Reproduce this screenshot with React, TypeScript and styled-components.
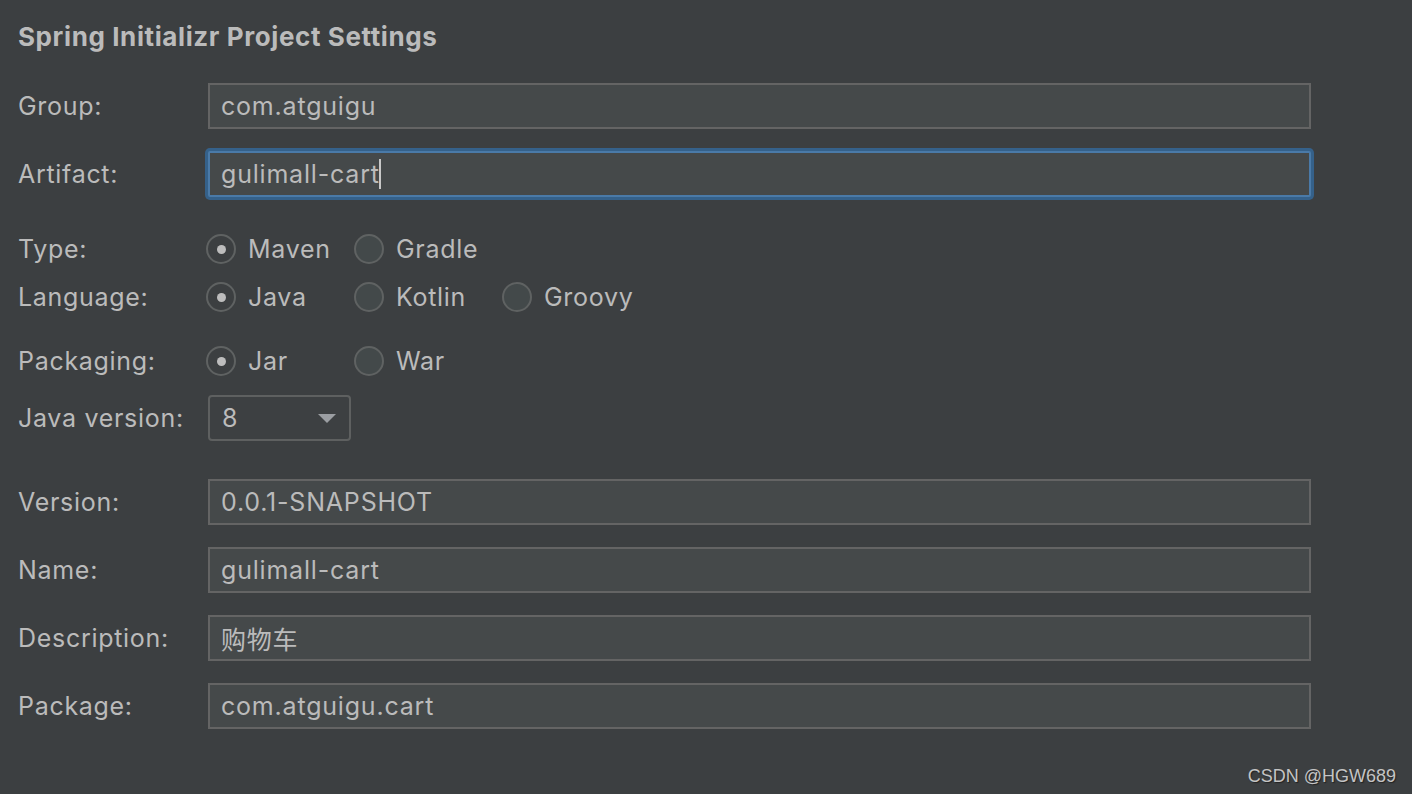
import React from "react";
import styled, { createGlobalStyle } from "styled-components";

const Global = createGlobalStyle`
  html, body { margin: 0; padding: 0; background: #3c3f41; }
  body { font-family: Inter, "Noto Sans", "Noto Sans CJK SC", sans-serif; color: #bbbbbb; }
`;

const Page = styled.div`
  position: relative;
  width: 1412px;
  height: 794px;
  background: #3c3f41;
  box-sizing: border-box;
  padding: 22px 0 0 18px;
  overflow: hidden;
`;

const Title = styled.h1`
  margin: 0;
  font-size: 26px;
  line-height: 30px;
  font-weight: 700;
  color: #bbbbbb;
  letter-spacing: 0.6px;
`;

const Row = styled.div<{ $top: number; $h: number }>`
  display: grid;
  grid-template-columns: 190px 1103px;
  align-items: center;
  height: ${(p) => p.$h}px;
  margin-top: ${(p) => p.$top}px;
`;

const Label = styled.label`
  font-size: 25px;
  color: #bbbbbb;
  line-height: 30px;
  letter-spacing: 0.7px;
`;

const Field = styled.div<{ $focused?: boolean }>`
  box-sizing: border-box;
  height: 46px;
  width: 1103px;
  background: #45494a;
  border: 2px solid ${(p) => (p.$focused ? "#4a7aa8" : "#646464")};
  border-radius: ${(p) => (p.$focused ? "2px" : "0")};
  box-shadow: ${(p) => (p.$focused ? "0 0 0 3px #35618a" : "none")};
  padding-left: 11px;
  display: flex;
  align-items: center;
  font-size: 25px;
  letter-spacing: 0.8px;
  color: #bbbbbb;
  font-family: Inter, "Noto Sans CJK SC", sans-serif;
`;

const Caret = styled.span`
  display: inline-block;
  width: 2px;
  height: 30px;
  background: #c8c8c8;
  margin-left: -1px;
`;

const RadioGroup = styled.div`
  display: grid;
  grid-template-columns: repeat(3, 148px);
  margin-left: -2px;
`;

const Option = styled.div`
  display: flex;
  align-items: center;
  gap: 12px;
  font-size: 25px;
  letter-spacing: 0.7px;
  color: #bbbbbb;
`;

const Circle = styled.span<{ $checked?: boolean }>`
  box-sizing: border-box;
  width: 30px;
  height: 30px;
  border-radius: 50%;
  border: 2px solid #5f6262;
  background: ${(p) => (p.$checked ? "#3c3f41" : "#43494a")};
  display: flex;
  align-items: center;
  justify-content: center;
  &::after {
    content: "";
    display: ${(p) => (p.$checked ? "block" : "none")};
    width: 9px;
    height: 9px;
    border-radius: 50%;
    background: #bdbdbd;
  }
`;

const Select = styled.div`
  box-sizing: border-box;
  width: 143px;
  height: 46px;
  border: 2px solid #5e6060;
  border-radius: 4px;
  background: #3d4042;
  display: flex;
  align-items: center;
  justify-content: space-between;
  padding: 0 13px 0 12px;
  font-size: 25px;
  color: #bbbbbb;
`;

const Arrow = styled.span`
  width: 0;
  height: 0;
  border-left: 9px solid transparent;
  border-right: 9px solid transparent;
  border-top: 9px solid #9b9ea2;
`;

const Watermark = styled.div`
  position: absolute;
  right: 16px;
  bottom: 7px;
  font-family: "Liberation Sans", Arial, sans-serif;
  font-size: 18px;
  color: #c4c4c4;
  text-shadow: 1px 1px 1px #222;
`;

type Opt = { label: string; checked?: boolean };

const Radios = ({ options }: { options: Opt[] }) => (
  <RadioGroup>
    {options.map((o) => (
      <Option key={o.label}>
        <Circle $checked={o.checked} />
        {o.label}
      </Option>
    ))}
  </RadioGroup>
);

export default function App() {
  return (
    <>
      <Global />
      <Page>
        <Title>Spring Initializr Project Settings</Title>
        <Row $top={31} $h={46}>
          <Label>Group:</Label>
          <Field>com.atguigu</Field>
        </Row>
        <Row $top={22} $h={46}>
          <Label>Artifact:</Label>
          <Field $focused>
            gulimall-cart
            <Caret />
          </Field>
        </Row>
        <Row $top={37} $h={30}>
          <Label>Type:</Label>
          <Radios options={[{ label: "Maven", checked: true }, { label: "Gradle" }]} />
        </Row>
        <Row $top={18} $h={30}>
          <Label>Language:</Label>
          <Radios options={[{ label: "Java", checked: true }, { label: "Kotlin" }, { label: "Groovy" }]} />
        </Row>
        <Row $top={34} $h={30}>
          <Label>Packaging:</Label>
          <Radios options={[{ label: "Jar", checked: true }, { label: "War" }]} />
        </Row>
        <Row $top={19} $h={46}>
          <Label>Java version:</Label>
          <Select>
            8
            <Arrow />
          </Select>
        </Row>
        <Row $top={38} $h={46}>
          <Label>Version:</Label>
          <Field>0.0.1-SNAPSHOT</Field>
        </Row>
        <Row $top={22} $h={46}>
          <Label>Name:</Label>
          <Field>gulimall-cart</Field>
        </Row>
        <Row $top={22} $h={46}>
          <Label>Description:</Label>
          <Field>购物车</Field>
        </Row>
        <Row $top={22} $h={46}>
          <Label>Package:</Label>
          <Field>com.atguigu.cart</Field>
        </Row>
        <Watermark>CSDN @HGW689</Watermark>
      </Page>
    </>
  );
}
